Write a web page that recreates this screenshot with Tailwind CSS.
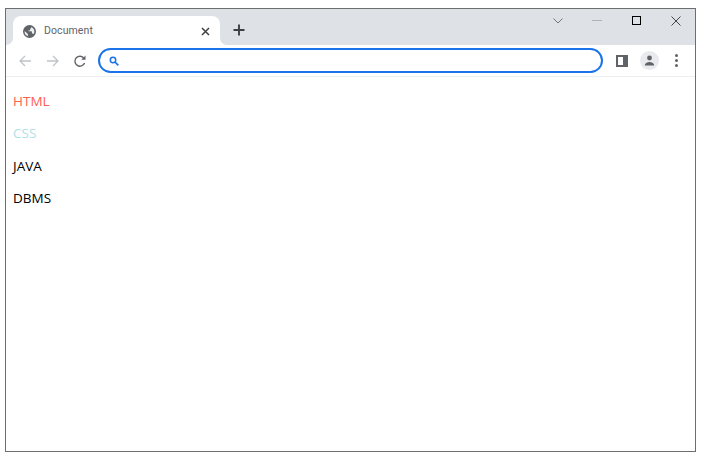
<!DOCTYPE html>
<html lang="en">

<head>
    <meta charset="UTF-8" />
    <title>Document</title>
    <script src="https://cdn.jsdelivr.net/npm/@tailwindcss/browser@4"></script>
</head>

<body class="bg-white h-[458px] overflow-hidden">
    <!-- Browser window -->
    <div class="ml-[5px] mt-[8px] w-[691px] h-[444px] border border-[#6e6e6e] flex flex-col font-['Roboto',sans-serif]">

        <!-- Tab strip -->
        <div class="h-[36px] bg-[#dee1e6] flex items-end pl-[7px] shrink-0">
            <div class="relative w-[207px] h-[29px] bg-white rounded-t-[8px] flex items-center pl-[10px] pr-[10px]">
                <svg class="absolute -left-[7px] bottom-0" width="7" height="7" viewBox="0 0 7 7"><path d="M7 0v7H0a7 7 0 0 0 7-7z" fill="#fff"/></svg>
                <svg class="absolute -right-[7px] bottom-0" width="7" height="7" viewBox="0 0 7 7"><path d="M0 0v7h7a7 7 0 0 1-7-7z" fill="#fff"/></svg>
                <!-- globe -->
                <svg width="13" height="13" viewBox="0 0 24 24" class="shrink-0 mt-[1px]"><circle cx="12" cy="12" r="12" fill="#5f6368"/><path fill="#fff" d="M3 11l6 5.500v2.500c0 .7.4 1.300 1 1.600A9 9 0 0 1 3 11zM15 3.800c3.500 1.200 6 4.400 6 8.200 0 1.700-.5 3.300-1.300 4.600-.5-.6-1.300-1-2.200-1h-1v-3c0-.7-.5-1.200-1.200-1.200H10V10h2c.7 0 1.200-.5 1.200-1.200V6.500H15z" opacity=".9"/></svg>
                <span class="ml-[8px] mt-[1px] text-[10.500px] text-[#5f6368] tracking-[0.1px]">Document</span>
                <svg class="ml-auto mt-[1px]" width="9" height="9" viewBox="0 0 9 9"><path d="M1 1l7 7M8 1L1 8" stroke="#3c4043" stroke-width="1.500" fill="none"/></svg>
            </div>
            <!-- new tab -->
            <svg class="ml-[13px] mb-[9px]" width="12" height="12" viewBox="0 0 12 12"><path d="M6 .5v11M.5 6h11" stroke="#3c4043" stroke-width="1.900" fill="none"/></svg>

            <!-- Window controls -->
            <div class="ml-auto self-start h-full flex items-start">
                <svg class="mt-[9px] mr-[29px]" width="10" height="6" viewBox="0 0 10 6"><path d="M.5.5L5 5 9.500.5" stroke="#70757a" stroke-width="1" fill="none"/></svg>
                <div class="mt-[11px] mr-[30px] w-[10px] h-px bg-[#b0b3b8]"></div>
                <div class="mt-[7px] mr-[30px] w-[9px] h-[9px] border border-black"></div>
                <svg class="mt-[7px] mr-[14px]" width="10" height="10" viewBox="0 0 10 10"><path d="M.5.5l9 9M9.500.5l-9 9" stroke="#444" stroke-width="1" fill="none"/></svg>
            </div>
        </div>

        <!-- Toolbar -->
        <div class="h-[32px] bg-white border-b border-[#eceef0] flex items-center pl-[12px] shrink-0">
            <svg width="14" height="14" viewBox="0 0 14 14"><path d="M13 7H2M7 2L2 7l5 5" stroke="#c0c3c7" stroke-width="1.300" fill="none"/></svg>
            <svg class="ml-[14px]" width="14" height="14" viewBox="0 0 14 14"><path d="M1 7h11M7 2l5 5-5 5" stroke="#c0c3c7" stroke-width="1.300" fill="none"/></svg>
            <svg class="ml-[13px]" width="14" height="14" viewBox="0 0 14 14"><path d="M11.600 9a5 5 0 1 1-.6-4.700" stroke="#5f6368" stroke-width="1.400" fill="none"/><path d="M12.500 1.500v4.300H8.200z" fill="#5f6368"/></svg>
            <!-- Address bar -->
            <div class="ml-[11px] w-[505px] h-[25px] rounded-full border-2 border-[#1a73e8] flex items-center pl-[9px]">
                <svg width="10" height="10" viewBox="0 0 10 10"><circle cx="4" cy="4" r="2.700" stroke="#1a73e8" stroke-width="1.500" fill="none"/><path d="M6 6l3.300 3.300" stroke="#1a73e8" stroke-width="1.700"/></svg>
            </div>
            <!-- Side panel -->
            <div class="ml-[13px] w-[12px] h-[12px] border-2 border-[#5f6368] border-r-[5px]"></div>
            <!-- Profile -->
            <div class="ml-[12px] w-[19px] h-[19px] rounded-full bg-[#e8eaed] flex items-center justify-center">
                <svg width="11" height="11" viewBox="0 0 11 11"><circle cx="5.500" cy="3" r="2.400" fill="#5f6368"/><path d="M.8 10.500c0-2.400 2.300-3.600 4.700-3.600s4.700 1.200 4.700 3.600z" fill="#5f6368"/></svg>
            </div>
            <!-- Menu -->
            <div class="ml-[16px] flex flex-col gap-[2px]">
                <div class="w-[3px] h-[3px] rounded-full bg-[#5f6368]"></div>
                <div class="w-[3px] h-[3px] rounded-full bg-[#5f6368]"></div>
                <div class="w-[3px] h-[3px] rounded-full bg-[#5f6368]"></div>
            </div>
        </div>

        <!-- Page content -->
        <div class="flex-1 bg-white pt-[8px] pl-[7px] font-['Open_Sans',sans-serif] text-[13.500px]">
            <p class="h-[32.400px] leading-[32px] text-[#ff6054]">HTML</p>
            <p class="h-[32.400px] leading-[32px] text-[#b0e0e6]">CSS</p>
            <p class="h-[32.400px] leading-[32px] text-black">JAVA</p>
            <p class="h-[32.400px] leading-[32px] text-black">DBMS</p>
        </div>
    </div>
</body>

</html>
